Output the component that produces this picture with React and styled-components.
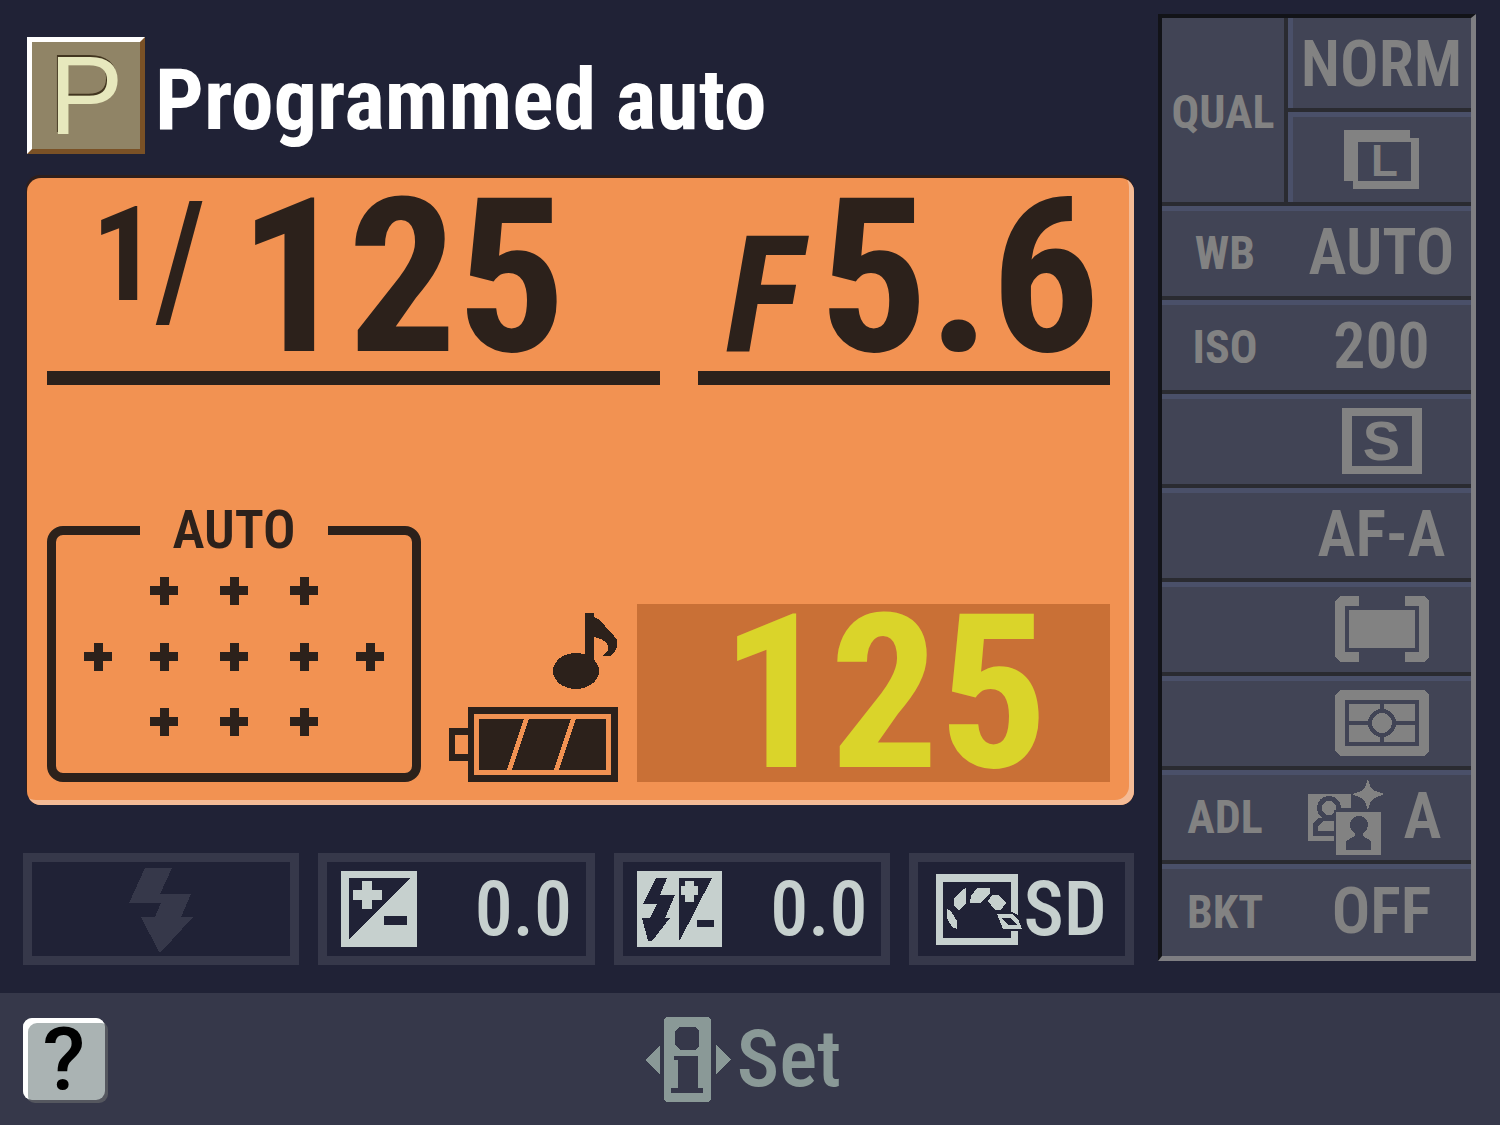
import React from "react";
import styled, { createGlobalStyle, ThemeProvider } from "styled-components";

const theme = {
  night: "#202236",
  slate: "#36384a",
  lcd: "#f29252",
  lcdEdge: "#f4bb96",
  ink: "#2c211b",
  highlight: "#c97036",
  yellow: "#dad42a",
  pale: "#c6d0ce",
  cell: "#414455",
  cellLight: "#4a5069",
  cellLine: "#2a2b31",
  dim: "#828282",
  sage: "#8a9997",
  narrow: '"Roboto Condensed", "Open Sans Condensed", Roboto, "Liberation Sans", sans-serif',
  digits: 'Roboto, "Liberation Sans", sans-serif',
  wide: '"Liberation Sans", Arial, sans-serif',
};

const GlobalStyle = createGlobalStyle`
  *, *::before, *::after { box-sizing: border-box; }
  body { margin: 0; background: ${theme.night}; }
`;

const Screen = styled.div`
  min-height: 100vh;
  display: flex;
  flex-direction: column;
  background: ${(p) => p.theme.night};
  font-family: ${(p) => p.theme.narrow};
`;

const Body = styled.main`
  flex: 1;
  display: flex;
  align-items: stretch;
  gap: 24px;
  padding: 14px 24px 28px 23px;
`;

const Left = styled.div`
  flex: 1;
  min-width: 0;
  display: flex;
  flex-direction: column;
`;

const Header = styled.header`
  display: flex;
  align-items: center;
  gap: 10px;
  padding: 23px 0 24px 4px;
`;

const ModeBadge = styled.span`
  display: flex;
  align-items: center;
  justify-content: center;
  width: 118px;
  height: 117px;
  border: 5px solid;
  border-color: #ffffff #7a5126 #7a5126 #ffffff;
  background: #908466;
  color: #e7e8bd;
  font: 400 112px/108px ${(p) => p.theme.wide};
  text-shadow: -1px -2px 0 #42351f;
`;

const Title = styled.h1`
  margin: 0;
  padding-top: 8px;
  color: #ffffff;
  font-size: 86px;
  line-height: 100px;
  font-weight: 700;
  white-space: nowrap;
`;

const Lcd = styled.section`
  flex: 1;
  display: flex;
  flex-direction: column;
  justify-content: space-between;
  margin-left: 4px;
  padding: 14px 24px 23px 20px;
  border-radius: 14px;
  background: ${(p) => p.theme.lcd};
  color: ${(p) => p.theme.ink};
  box-shadow: inset -5px -5px 0 ${(p) => p.theme.lcdEdge}, -1px -3px 0 #2e1f1c;
`;

const Exposure = styled.div`
  display: grid;
  grid-template-columns: 613fr 412fr;
  column-gap: 38px;
  font-weight: 700;
`;

const Readout = styled.div`
  display: flex;
  align-items: ${(p) => p.$align};
  justify-content: flex-end;
  padding-right: ${(p) => p.$end}px;
  height: 193px;
  border-bottom: 14px solid ${(p) => p.theme.ink};
`;

const Figure = styled.span`
  font-size: 216px;
  line-height: 172px;
`;

const Numerator = styled.span`
  font-size: 132px;
  line-height: 126px;
`;

const Slash = styled.span`
  margin: 0 36px 0 -2px;
  font-family: ${(p) => p.theme.wide};
  font-size: 168px;
  line-height: 146px;
  font-weight: 400;
`;

const FNumber = styled.span`
  margin-right: 18px;
  font-size: 163px;
  line-height: 120px;
  font-style: italic;
`;

const LowerRow = styled.div`
  display: grid;
  grid-template-columns: 374fr 178px 473fr;
  column-gap: 19px;
  align-items: end;
`;

const FocusArea = styled.fieldset`
  margin: 0;
  min-width: 0;
  padding: 26px 0 37px;
  border: 9px solid ${(p) => p.theme.ink};
  border-radius: 16px;
  display: flex;
  justify-content: center;
`;

const FocusMode = styled.legend`
  margin: 0 auto;
  padding: 0 32px;
  font-size: 54px;
  line-height: 42px;
  font-weight: 600;
`;

const StatusIcons = styled.div`
  display: flex;
  flex-direction: column;
  align-items: flex-end;
  gap: 18px;
`;

const Remaining = styled.output`
  display: flex;
  justify-content: flex-end;
  padding: 6px 62px 4px 0;
  background: ${(p) => p.theme.highlight};
  color: ${(p) => p.theme.yellow};
  font-size: 216px;
  line-height: 168px;
  font-weight: 700;
`;

const Indicators = styled.div`
  display: grid;
  grid-template-columns: 277fr 277fr 277fr 225fr;
  column-gap: 19px;
  margin-top: 48px;
`;

const Indicator = styled.div`
  display: flex;
  align-items: center;
  justify-content: ${(p) => p.$justify || "space-between"};
  height: 112px;
  padding: 0 14px;
  border: 9px solid ${(p) => p.theme.slate};
  color: ${(p) => p.theme.pale};
  font-size: 76px;
  line-height: 80px;
  font-weight: 500;
`;

const Settings = styled.table`
  flex: none;
  align-self: flex-start;
  width: 318px;
  table-layout: fixed;
  border-collapse: separate;
  border-spacing: 0;
  border: 4px solid;
  border-width: 4px 5px 5px 4px;
  border-color: #121318 #7e7e82 #7e7e82 #121318;
  color: ${(p) => p.theme.dim};
`;

const cellShadow = (p) =>
  `inset ${p.$left ? 5 : 0}px ${p.$first ? 0 : 5}px 0 ${p.theme.cellLight}`;

const Name = styled.th`
  width: 126px;
  height: ${(p) => (p.$last ? 92 : 94)}px;
  padding: 4px 0 0;
  border-right: ${(p) => (p.$split ? 4 : 0)}px solid ${(p) => p.theme.cellLine};
  border-bottom: ${(p) => (p.$last ? 0 : 4)}px solid ${(p) => p.theme.cellLine};
  background: ${(p) => p.theme.cell};
  box-shadow: ${cellShadow};
  font-size: 46px;
  line-height: 48px;
  font-weight: 700;
  text-align: center;
  vertical-align: middle;
`;

const Value = styled.td`
  height: ${(p) => (p.$last ? 92 : 94)}px;
  padding: 4px 0 0 4px;
  border-bottom: ${(p) => (p.$last ? 0 : 4)}px solid ${(p) => p.theme.cellLine};
  background: ${(p) => p.theme.cell};
  box-shadow: ${cellShadow};
  font-size: 64px;
  line-height: 72px;
  font-weight: 600;
  text-align: center;
  vertical-align: middle;
  white-space: nowrap;
`;

const Inline = styled.span`
  display: flex;
  align-items: center;
  justify-content: center;
  gap: ${(p) => p.$gap || 0}px;
`;

const AdlValue = styled(Inline)`
  padding-right: 14px;
`;

const SizeTag = styled.span`
  display: flex;
  align-items: center;
  justify-content: center;
  width: 66px;
  height: 51px;
  margin: 8px 0 0 9px;
  border: solid ${(p) => p.theme.dim};
  border-width: 4px 8px 8px 5px;
  background: ${(p) => p.theme.cell};
  box-shadow: -9px -8px 0 ${(p) => p.theme.dim};
  font: 700 44px/40px ${(p) => p.theme.wide};
`;

const DriveTag = styled.span`
  display: flex;
  align-items: center;
  justify-content: center;
  width: 80px;
  height: 66px;
  border: solid ${(p) => p.theme.dim};
  border-width: 8px 10px;
  font: 700 56px/50px ${(p) => p.theme.wide};
`;

const Footer = styled.footer`
  display: grid;
  grid-template-columns: 1fr auto 1fr;
  align-items: center;
  min-height: 132px;
  padding: 0 37px 0 23px;
  background: ${(p) => p.theme.slate};
`;

const HelpButton = styled.button`
  justify-self: start;
  width: 82px;
  height: 82px;
  padding: 0;
  border: 0;
  border-radius: 9px;
  background: #aab3b3;
  box-shadow: inset 5px 5px 0 #ffffff, 3px 3px 0 #55575f;
  color: #000000;
  font: 500 88px/80px ${(p) => p.theme.digits};
`;

const SetButton = styled.button`
  display: flex;
  align-items: center;
  gap: 6px;
  padding: 0;
  border: 0;
  background: none;
  color: ${(p) => p.theme.sage};
  font: 500 80px/84px ${(p) => p.theme.narrow};
`;

const Icon = styled.svg`
  display: block;
  flex: none;
  overflow: visible;
`;

function Drawing({ w, h, children, ...rest }) {
  return (
    <Icon width={w} height={h} viewBox={`0 0 ${w} ${h}`} fill="currentColor" shapeRendering="crispEdges" aria-hidden="true" {...rest}>
      {children}
    </Icon>
  );
}

const points = [
  [80, 14], [150, 14], [220, 14],
  [14, 80], [80, 80], [150, 80], [220, 80], [286, 80],
  [80, 145], [150, 145], [220, 145],
];

const FocusPoints = () => (
  <Drawing w={300} h={159}>
    {points.map(([x, y]) => (
      <path key={`${x}-${y}`} d={`M${x - 14} ${y - 5}h10v-9h9v9h9v9h-9v10h-9v-10h-10z`} />
    ))}
  </Drawing>
);

const NoteIcon = () => (
  <Drawing w={65} h={76}>
    <ellipse cx="23" cy="58" rx="23" ry="18" />
    <path d="M32 0h9v4c5 2 8 5 11 9c5 5 9 9 12 14v7c-1 4-3 6-6 9h-9l6-6c2-6-3-11-14-13v32h-9z" />
  </Drawing>
);

const BatteryIcon = () => (
  <Drawing w={169} h={75}>
    <path fillRule="evenodd" d="M19 0h150v75H19V54H0V21h19zM25 7v61h137V7zM6 28v19h13V28z" />
    <path d="M30 12h45L58 63H30zM80 12h42l-17 51H63zM127 12h30v51h-47z" />
  </Drawing>
);

const FlashIcon = () => (
  <Drawing w={64} h={82} color={theme.slate}>
    <path d="M16 0h27L31 26h31l-10 23h12L32 84h-2L12 49h14l6-14H0z" />
  </Drawing>
);

const ExposureCompIcon = () => (
  <Drawing w={76} h={76}>
    <path d="M0 0h76v76H0z" />
    <path fill={theme.night} d="M8 7h61L8 69zM43 45h23v9H43z" />
    <path d="M12 19h9v-9h10v9h10v10H31v9H21v-9h-9z" />
  </Drawing>
);

const FlashCompIcon = () => (
  <Drawing w={85} h={76}>
    <path d="M0 0h85v76H0z" />
    <path fill={theme.night} d="M19 7h11l-7 17h15l-10 23h5L15 70h-4L5 47h8l7-14H6zM42 7h33L43 69h-1zM60 49h17v7H60z" />
    <path d="M44 15h4v-5h9v5h4v9h-4v7h-9v-7h-4z" />
  </Drawing>
);

const PictureControlIcon = () => (
  <Drawing w={87} h={71}>
    <path fillRule="evenodd" d="M0 0h82v71H0zM7 8v56h68V8z" />
    <path d="M11 35l4 2 6 10v8l-5-2-5-9zM30 14v15l-7 7-5-4v-7l7-8zM41 14h13v5l-9 10H34l1-7zM56 21h6l8 8-5 7h-6l-7-9z" />
    <path fill={theme.night} d="M59 38h17l8 4 5 15H65z" />
    <path fillRule="evenodd" d="M61 40h15l6 5 4 10H67zM66 44l6 7h9l-6-7z" />
  </Drawing>
);

const AreaIcon = () => (
  <Drawing w={94} h={66}>
    <path d="M24 0H5L0 5v56l5 5h19v-10H10V10h14zM70 0h19l5 5v56l-5 5H70v-10h14V10H70zM14 14h66v38H14z" />
  </Drawing>
);

const MeteringIcon = () => (
  <Drawing w={94} h={66}>
    <path fillRule="evenodd" d="M5 0h84l5 5v56l-5 5H5l-5-5V5zM10 10v46h74V10z" />
    <path d="M14 14h66v38H14z" />
    <path fill={theme.cell} d="M45 14h4v38h-4zM14 31h66v4H14z" />
    <circle cx="47" cy="33" r="14" fill={theme.cell} />
    <circle cx="47" cy="33" r="10" />
  </Drawing>
);

const LightingIcon = () => (
  <Drawing w={76} h={76}>
    <path d="M0 15h43v14H28v33H0z" />
    <circle cx="21" cy="29" r="12" fill={theme.cell} />
    <circle cx="21" cy="29" r="7" />
    <path fill={theme.cell} d="M5 57V45l5-6h18v18z" />
    <path d="M10 52v-5l5-5h13v10z" />
    <path fill={theme.cell} d="M26 31h20v34H26z" />
    <path d="M28 33h45v43H28z" />
    <circle cx="51" cy="46" r="9" fill={theme.cell} />
    <path fill={theme.cell} d="M47 52h8v5l8 5v9H38v-9l9-5z" />
    <path d="M60 0l3 9 4 3 9 3-9 4-4 3-3 9-3-9-4-3-9-4 9-3 4-3z" />
  </Drawing>
);

const InfoIcon = () => (
  <Drawing w={86} h={85}>
    <path d="M15 28v29L0 43zM71 28v29l15-14z" />
    <rect x="19" width="47" height="85" rx="4" />
    <path fill={theme.slate} d="M35 10h15l4 4v15l-4 4H35l-5-5V14zM29 39h24v32h5v5H26v-5h7V43h-4z" />
  </Drawing>
);

export default function App() {
  return (
    <ThemeProvider theme={theme}>
      <GlobalStyle />
      <Screen>
        <Body>
          <Left>
            <Header>
              <ModeBadge>P</ModeBadge>
              <Title>Programmed auto</Title>
            </Header>
            <Lcd>
              <Exposure>
                <Readout $align="flex-start" $end={94}>
                  <Numerator>1</Numerator>
                  <Slash>/</Slash>
                  <Figure>125</Figure>
                </Readout>
                <Readout $align="baseline" $end={10}>
                  <FNumber>F</FNumber>
                  <Figure>5.6</Figure>
                </Readout>
              </Exposure>
              <LowerRow>
                <FocusArea>
                  <FocusMode>AUTO</FocusMode>
                  <FocusPoints />
                </FocusArea>
                <StatusIcons>
                  <NoteIcon />
                  <BatteryIcon />
                </StatusIcons>
                <Remaining>125</Remaining>
              </LowerRow>
            </Lcd>
            <Indicators>
              <Indicator $justify="center"><FlashIcon /></Indicator>
              <Indicator><ExposureCompIcon />0.0</Indicator>
              <Indicator><FlashCompIcon />0.0</Indicator>
              <Indicator $justify="center"><PictureControlIcon />SD</Indicator>
            </Indicators>
          </Left>
          <Settings>
            <tbody>
              <tr>
                <Name scope="rowgroup" rowSpan={2} $first $split>QUAL</Name>
                <Value $first $left>NORM</Value>
              </tr>
              <tr><Value $left><Inline><SizeTag>L</SizeTag></Inline></Value></tr>
              <tr><Name scope="row">WB</Name><Value>AUTO</Value></tr>
              <tr><Name scope="row">ISO</Name><Value>200</Value></tr>
              <tr><Name /><Value><Inline><DriveTag>S</DriveTag></Inline></Value></tr>
              <tr><Name /><Value>AF-A</Value></tr>
              <tr><Name /><Value><Inline><AreaIcon /></Inline></Value></tr>
              <tr><Name /><Value><Inline><MeteringIcon /></Inline></Value></tr>
              <tr><Name scope="row">ADL</Name><Value><AdlValue $gap={20}><LightingIcon />A</AdlValue></Value></tr>
              <tr><Name scope="row" $last>BKT</Name><Value $last>OFF</Value></tr>
            </tbody>
          </Settings>
        </Body>
        <Footer>
          <HelpButton type="button">?</HelpButton>
          <SetButton type="button"><InfoIcon />Set</SetButton>
        </Footer>
      </Screen>
    </ThemeProvider>
  );
}
